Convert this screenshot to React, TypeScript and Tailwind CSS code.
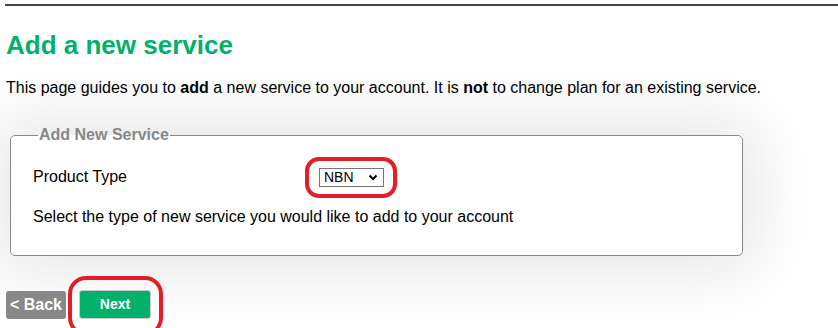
import React from "react";

export default function App() {
  return (
    <div className="w-[838px] h-[328px] overflow-hidden bg-white relative" style={{ fontFamily: '"Liberation Sans", Arial, sans-serif' }}>
      <div className="pl-[5px] pt-[4px]">
        <div className="h-[2px] bg-[#444]" />
        <h1 className="mt-[24px] ml-[1px] text-[26px] leading-[30px] font-bold text-[#00b06b]">Add a new service</h1>
        <p className="mt-[18px] ml-[1px] text-[16px] leading-[20px] text-black">
          This page guides you to <b>add</b> a new service to your account. It is <b>not</b> to change plan for an existing service.
        </p>
        <fieldset className="mt-[27px] ml-[5px] w-[733px] h-[131px] border border-[#888] rounded-[5px] bg-white shadow-[0_0_70px_12px_rgba(0,0,0,0.11)] px-[22px]">
          <legend className="ml-[5px] px-[1px] text-[16px] leading-[20px] font-bold text-[#888]">Add New Service</legend>
          <div className="flex items-center mt-[22px] h-[20px]">
            <div className="w-[286px] text-[16px] text-black">Product Type</div>
            <div className="relative">
              <div className="w-[65px] h-[19px] border border-[#767676] flex items-center justify-between pl-[4px] pr-[5px] text-[14px] text-black bg-white">
                <span>NBN</span>
                <svg width="10" height="7" viewBox="0 0 10 7"><path d="M1.5 1.5 L5 5 L8.5 1.5" fill="none" stroke="#000" strokeWidth="2" /></svg>
              </div>
              <div className="absolute left-[-14px] top-[-11px] w-[92px] h-[41px] border-[4px] border-[#e31e25] rounded-[14px]" />
            </div>
          </div>
          <div className="mt-[20px] text-[16px] leading-[20px] text-black">Select the type of new service you would like to add to your account</div>
        </fieldset>
        <div className="flex items-center mt-[34px] ml-[1px] gap-[13px]">
          <button className="h-[28px] w-[60px] bg-[#888] rounded-[3px] text-white font-bold text-[16px]">&lt; Back</button>
          <div className="relative">
            <button className="h-[29px] w-[72px] bg-[#00b06b] rounded-[3px] text-white font-bold text-[14px] border border-[#ccc]">Next</button>
            <div className="absolute left-[-11px] top-[-14px] w-[95px] h-[60px] border-[4px] border-[#e31e25] rounded-[18px]" />
          </div>
        </div>
      </div>
    </div>
  );
}
